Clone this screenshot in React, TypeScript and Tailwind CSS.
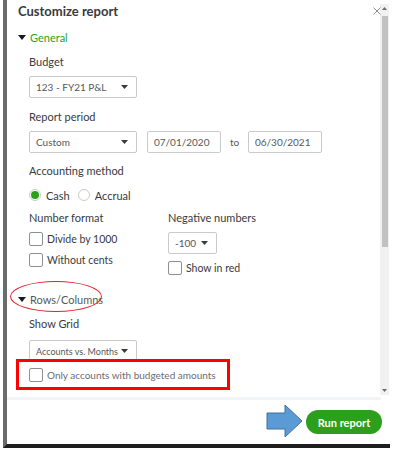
const Caret = () => (
  <svg width="8" height="5" viewBox="0 0 8 5" className="shrink-0">
    <path d="M0 0 H8 L4 5 Z" fill="#1a1a1a" />
  </svg>
);

const SelectBox = ({ text, w, small = false }: { text: string; w: string; small?: boolean }) => (
  <div
    className={`${w} h-[22px] border border-[#c9cacc] rounded-[2px] bg-white flex items-center justify-between pl-[6px] pr-[8px]`}
  >
    <span className={`${small ? 'text-[9px]' : 'text-[10px]'} text-[#55585c] leading-none whitespace-nowrap`}>{text}</span>
    <svg width="7" height="4" viewBox="0 0 7 4" className="shrink-0">
      <path d="M0 0 H7 L3.5 4 Z" fill="#393a3d" />
    </svg>
  </div>
);

const DateBox = ({ text }: { text: string }) => (
  <div className="w-[74px] h-[22px] border border-[#c9cacc] rounded-[2px] bg-white flex items-center pl-[6px]">
    <span className="text-[10px] text-[#55585c] leading-none">{text}</span>
  </div>
);

const Check = ({ label, dark = false }: { label: string; dark?: boolean }) => (
  <div className="flex items-center h-[14px]">
    <div className="w-[14px] h-[14px] border border-[#8d9096] rounded-[2px] bg-white shrink-0" />
    <span
      className={`ml-[4px] leading-none whitespace-nowrap ${
        dark ? 'text-[10.5px] text-[#393a3d]' : 'text-[10px] text-[#6b6c72]'
      }`}
    >
      {label}
    </span>
  </div>
);

export default function App() {
  return (
    <div className="w-[394px] h-[455px] bg-white relative overflow-hidden" style={{ fontFamily: 'Lato, "Open Sans", sans-serif' }}>
      <div className="ml-[3px] w-[387px] h-[448px] border-l-[4px] border-l-[#6b6b6b] border-b-[4px] border-b-[#1e1e1e] flex flex-col">
        {/* scrolling body */}
        <div className="h-[397px] flex relative">
          <div className="flex-1 pl-[11px]">
            <div className="pt-[3px] h-[19px] text-[13px] leading-[16px] font-bold text-[#393a3d]">Customize report</div>

            <div className="mt-[11px] h-[14px] flex items-center">
              <Caret />
              <span className="ml-[4px] text-[11px] text-[#2ca01c] leading-none">General</span>
            </div>

            <div className="pl-[11px]">
              <div className="mt-[11px] h-[14px] text-[11px] leading-[14px] text-[#393a3d]">Budget</div>
              <div className="mt-[7px]">
                <SelectBox text="123 - FY21 P&L" w="w-[108px]" />
              </div>

              <div className="mt-[12px] h-[14px] text-[11px] leading-[14px] text-[#393a3d]">Report period</div>
              <div className="mt-[7px] flex items-center">
                <SelectBox text="Custom" w="w-[108px]" />
                <div className="ml-[10px]">
                  <DateBox text="07/01/2020" />
                </div>
                <span className="ml-[9px] w-[18px] text-[10px] text-[#55585c]">to</span>
                <DateBox text="06/30/2021" />
              </div>

              <div className="mt-[11px] h-[14px] text-[11px] leading-[14px] text-[#393a3d]">Accounting method</div>
              <div className="mt-[10px] h-[14px] flex items-center">
                <div className="w-[12px] h-[12px] rounded-full border border-[#c9cacc] flex items-center justify-center">
                  <div className="w-[8px] h-[8px] rounded-full bg-[#2ca01c]" />
                </div>
                <span className="ml-[5px] text-[11px] text-[#393a3d] leading-none">Cash</span>
                <div className="ml-[8px] w-[12px] h-[12px] rounded-full border border-[#c9cacc]" />
                <span className="ml-[5px] text-[11px] text-[#393a3d] leading-none">Accrual</span>
              </div>

              <div className="mt-[9px] flex">
                <div className="w-[139px]">
                  <div className="h-[14px] text-[11px] leading-[14px] text-[#393a3d]">Number format</div>
                  <div className="mt-[7px]">
                    <Check label="Divide by 1000" dark />
                  </div>
                  <div className="mt-[7px]">
                    <Check label="Without cents" dark />
                  </div>
                </div>
                <div>
                  <div className="h-[14px] text-[11px] leading-[14px] text-[#393a3d]">Negative numbers</div>
                  <div className="mt-[7px]">
                    <SelectBox text="-100" w="w-[49px]" />
                  </div>
                  <div className="mt-[7px]">
                    <Check label="Show in red" dark />
                  </div>
                </div>
              </div>
            </div>

            <div className="mt-[17px] h-[14px] flex items-center">
              <Caret />
              <span className="ml-[4px] text-[11px] text-[#55585c] leading-none">Rows/Columns</span>
            </div>

            <div className="pl-[11px]">
              <div className="mt-[11px] h-[14px] text-[11px] leading-[14px] text-[#393a3d]">Show Grid</div>
              <div className="mt-[9px]">
                <SelectBox text="Accounts vs. Months" w="w-[108px]" small />
              </div>
              <div className="mt-[6px]">
                <Check label="Only accounts with budgeted amounts" />
              </div>
            </div>
          </div>

          {/* close */}
          <svg className="absolute left-[366px] top-[7px]" width="8" height="8" viewBox="0 0 8 8">
            <path d="M0.5 0.5 L7.5 7.5 M7.5 0.5 L0.5 7.5" stroke="#8d9096" strokeWidth="1" />
          </svg>

          {/* scrollbar */}
          <div className="w-[9px] mt-[4px] mb-[2px] bg-[#f1f1f1] flex flex-col items-center mr-[1px]">
            <svg className="mt-[3px]" width="5" height="3" viewBox="0 0 5 3">
              <path d="M0 3 H5 L2.5 0 Z" fill="#6b6b6b" />
            </svg>
            <div className="mt-[6px] w-[6px] h-[231px] bg-[#c1c1c1]" />
            <div className="flex-1" />
            <svg className="mb-[3px]" width="5" height="3" viewBox="0 0 5 3">
              <path d="M0 0 H5 L2.5 3 Z" fill="#6b6b6b" />
            </svg>
          </div>

          {/* annotations */}
          <div className="absolute left-[3px] top-[281px] w-[92px] h-[31px] rounded-[50%] border border-[#e8202a]" />
          <div className="absolute left-[9px] top-[359px] w-[214px] h-[31px] border-[3px] border-[#ff0000]" />
        </div>

        <div className="h-[3px] bg-[#f3f4f6] mr-[9px]" />

        {/* footer */}
        <div className="flex-1 flex items-start justify-end pr-[8px] relative">
          <button className="mt-[10px] w-[76px] h-[24px] rounded-full bg-[#2ca01c] text-white text-[11px] font-bold leading-none">
            Run report
          </button>
          <svg className="absolute left-[259px] top-[4px]" width="38" height="34" viewBox="0 0 38 34">
            <path d="M1 9 H19 V1 L36 17 L19 33 V25 H1 Z" fill="#5b9bd5" stroke="#41719c" strokeWidth="1" />
          </svg>
        </div>
      </div>
    </div>
  );
}
